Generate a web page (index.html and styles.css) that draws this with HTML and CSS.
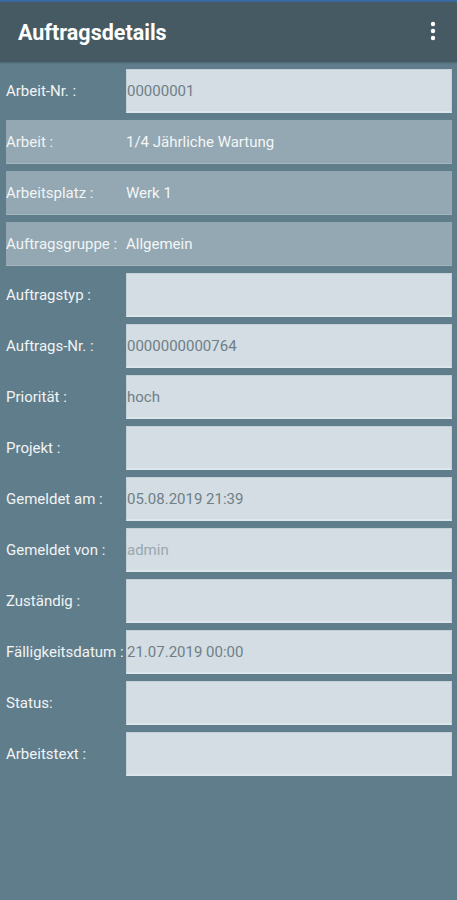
FILE: index.html
```html
<!DOCTYPE html>
<html lang="de">
<head>
<meta charset="utf-8">
<title>Auftragsdetails</title>
<link rel="stylesheet" href="styles.css">
</head>
<body>
<div class="topline"></div>
<header class="appbar">
  <h1 class="title">Auftragsdetails</h1>
  <svg class="menu" width="6" height="20" viewBox="0 0 6 20"><circle cx="3" cy="3" r="2.2" fill="#fff"/><circle cx="3" cy="10" r="2.2" fill="#fff"/><circle cx="3" cy="17" r="2.2" fill="#fff"/></svg>
</header>
<main class="list">
  <div class="row"><span class="label">Arbeit-Nr. :</span><span class="field">00000001</span></div>
  <div class="row filled"><span class="label">Arbeit :</span><span class="value">1/4 Jährliche Wartung</span></div>
  <div class="row filled"><span class="label">Arbeitsplatz :</span><span class="value">Werk 1</span></div>
  <div class="row filled"><span class="label">Auftragsgruppe :</span><span class="value">Allgemein</span></div>
  <div class="row"><span class="label">Auftragstyp :</span><span class="field"></span></div>
  <div class="row"><span class="label">Auftrags-Nr. :</span><span class="field">0000000000764</span></div>
  <div class="row"><span class="label">Priorität :</span><span class="field">hoch</span></div>
  <div class="row"><span class="label">Projekt :</span><span class="field"></span></div>
  <div class="row"><span class="label">Gemeldet am :</span><span class="field">05.08.2019 21:39</span></div>
  <div class="row"><span class="label">Gemeldet von :</span><span class="field hint">admin</span></div>
  <div class="row"><span class="label">Zuständig :</span><span class="field"></span></div>
  <div class="row"><span class="label">Fälligkeitsdatum :</span><span class="field">21.07.2019 00:00</span></div>
  <div class="row"><span class="label">Status:</span><span class="field"></span></div>
  <div class="row"><span class="label">Arbeitstext :</span><span class="field"></span></div>
</main>
</body>
</html>
```
FILE: styles.css
```css
html, body {
  margin: 0;
  padding: 0;
}
body {
  background: #607d8b;
  font-family: Roboto, "Liberation Sans", sans-serif;
  width: 457px;
  min-height: 900px;
}
.topline {
  height: 2px;
  background: #3b6aa0;
}
.appbar {
  height: 60px;
  background: #465a63;
  display: flex;
  align-items: center;
  justify-content: space-between;
  padding: 0 21px 0 18px;
  box-shadow: 0 1px 2px rgba(0,0,0,0.2);
}
.title {
  margin: 0;
  color: #ffffff;
  font-size: 21.5px;
  font-weight: 700;
}
.menu {
  display: block;
  margin-top: -2px;
}
.list {
  display: flex;
  flex-direction: column;
  gap: 7px;
  padding: 7px 5px 0 6px;
}
.row {
  height: 44px;
  display: grid;
  grid-template-columns: 120px 1fr;
  align-items: center;
  font-size: 15px;
}
.label {
  color: #f1f4f5;
  white-space: nowrap;
}
.field {
  height: 44px;
  box-sizing: border-box;
  background: #d3dde3;
  border: 1px solid #c3d0d7;
  border-bottom: 2px solid #dde6ea;
  display: flex;
  align-items: center;
  color: #6f7f87;
}
.field.hint {
  color: #9aa8af;
}
.row.filled {
  background: #93a8b2;
  border-bottom: 1px solid #a3b5bd;
  box-sizing: border-box;
}
.value {
  color: #f4f6f7;
}
```
